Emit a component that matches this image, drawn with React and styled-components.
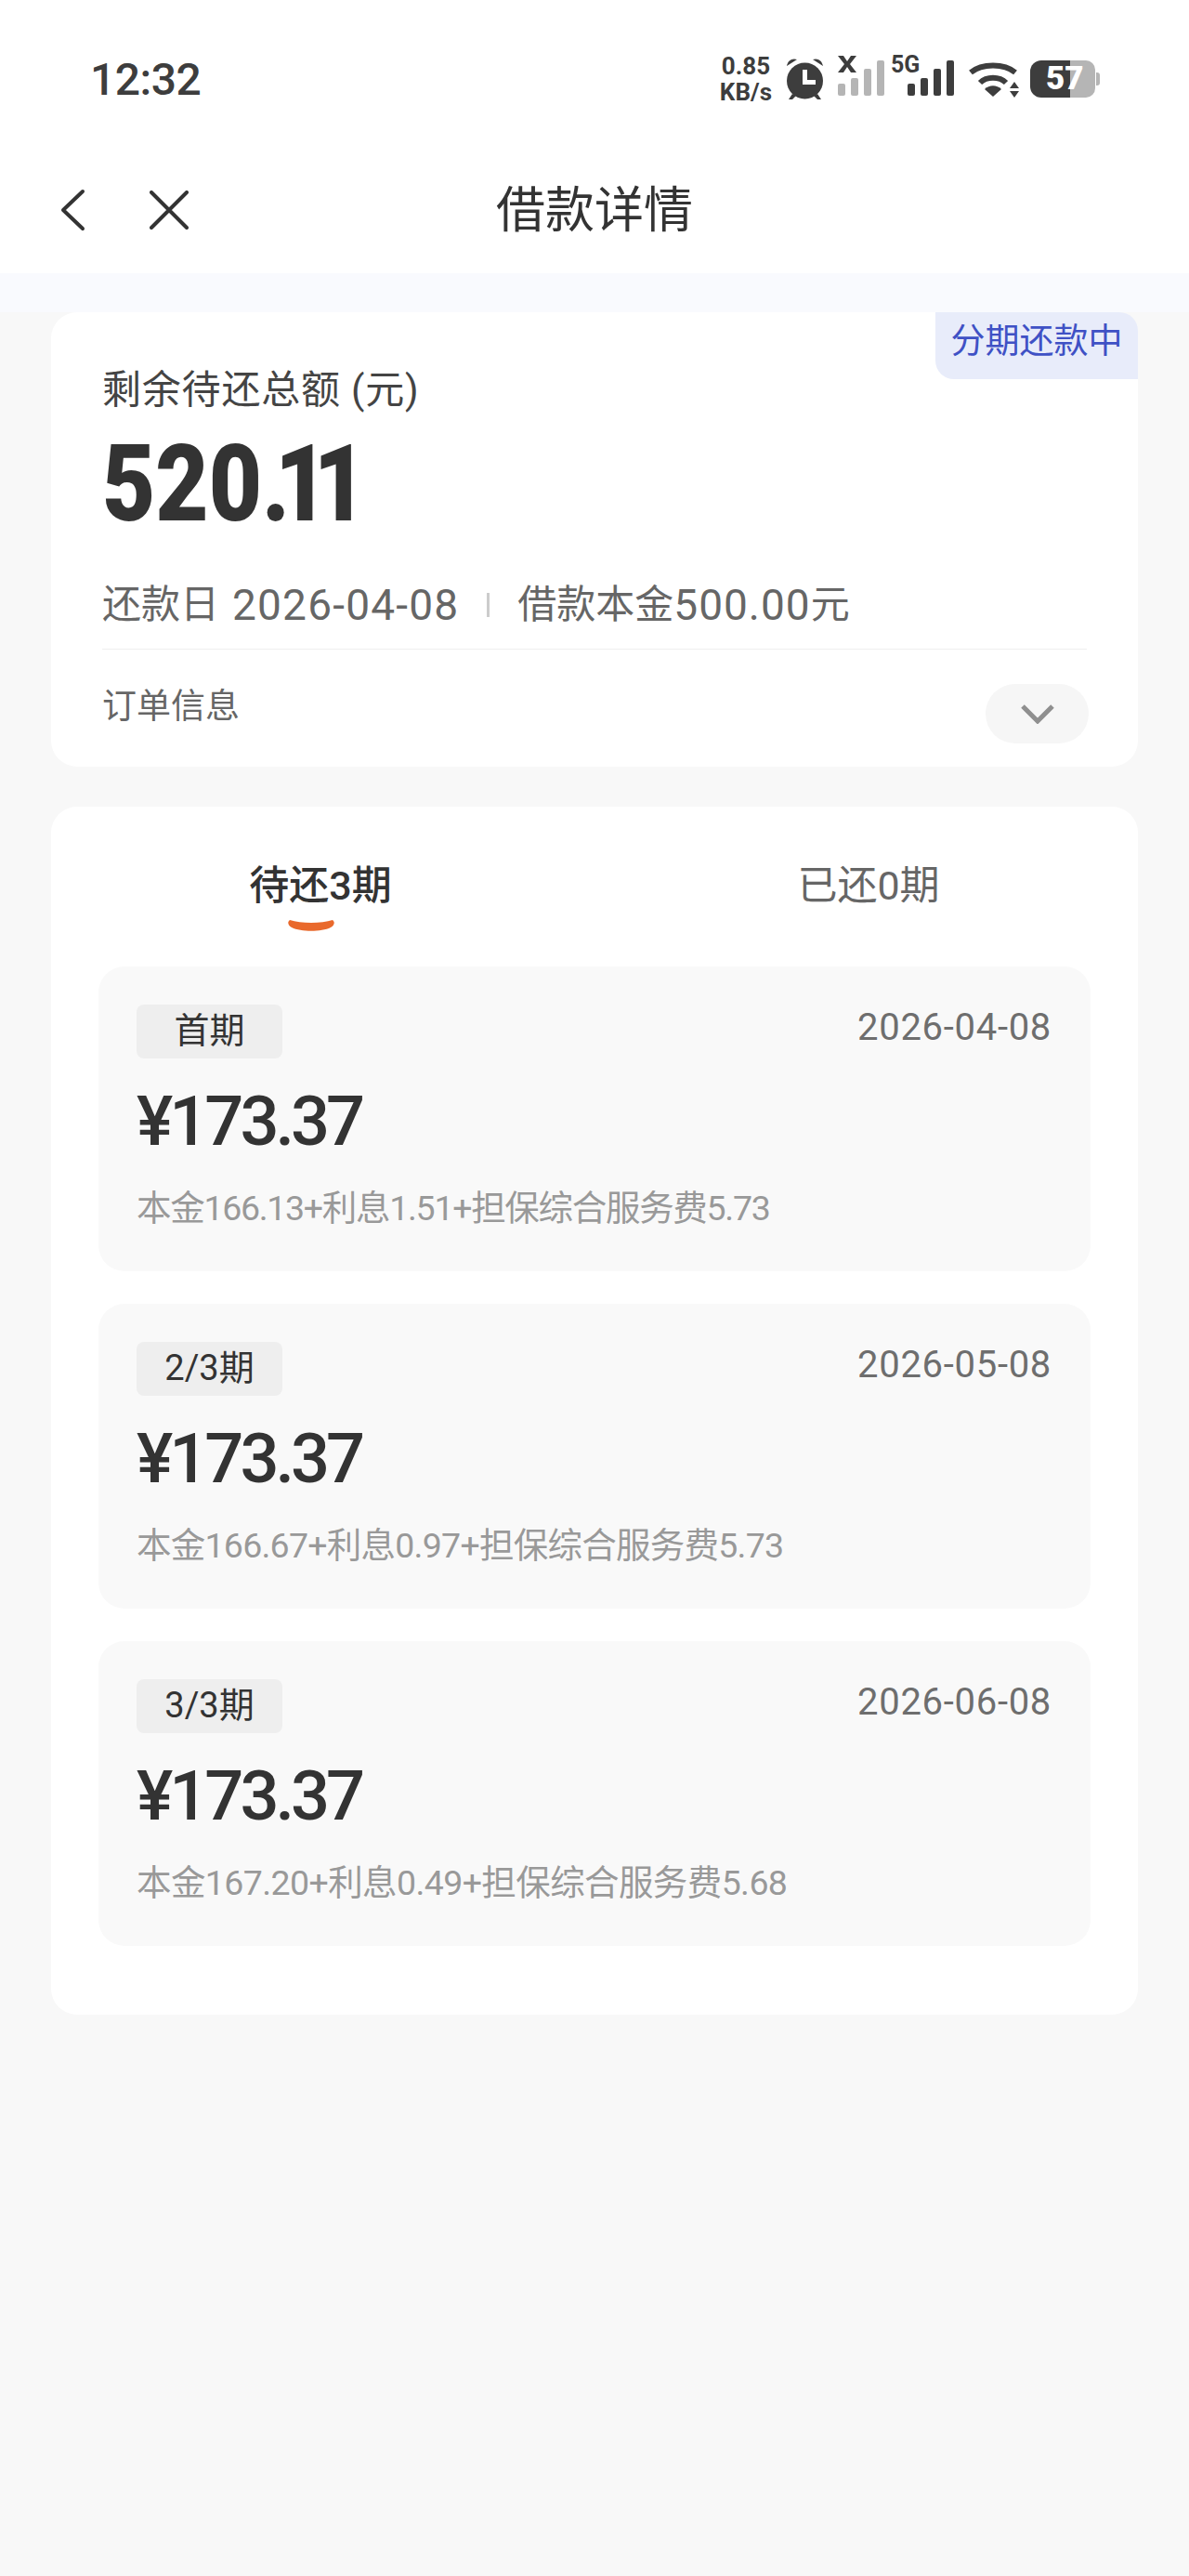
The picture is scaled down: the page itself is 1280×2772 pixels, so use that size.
import styled, { createGlobalStyle } from "styled-components";

const GlobalStyle = createGlobalStyle`
  html, body {
    margin: 0;
    padding: 0;
    background: #f8f8f8;
  }
  * {
    box-sizing: border-box;
  }
`;

const Page = styled.div`
  min-height: 2772px;
  background: #f8f8f8;
  color: #333;
  font-family: Roboto, "Noto Sans CJK SC", sans-serif;
`;

const Header = styled.header`
  background: #fff;
`;

const StatusBar = styled.div`
  height: 170px;
  padding: 0 96px 0 97px;
  display: flex;
  align-items: center;
  justify-content: space-between;
`;

const Clock = styled.span`
  font-size: 48px;
  font-weight: 500;
  color: #3d3d3d;
  letter-spacing: -0.5px;
`;

const StatusIcons = styled.div`
  display: flex;
  align-items: center;
  gap: 15px;
`;

const NetSpeed = styled.div`
  display: flex;
  flex-direction: column;
  align-items: center;
  font-size: 26px;
  line-height: 28px;
  font-weight: 700;
  color: #3d3d3d;
`;

const SignalWrap = styled.div`
  position: relative;
  width: 50px;
  height: 46px;
  margin-top: -10px;
  margin-left: ${(p) => p.$shift || 0}px;
`;

const SignalLabel = styled.span`
  position: absolute;
  left: -18px;
  top: 1px;
  font-size: 25px;
  line-height: 24px;
  font-weight: 700;
  color: #3d3d3d;
`;

const BatteryWrap = styled.div`
  position: relative;
  width: 75px;
  height: 40px;
  margin-left: -4px;
`;

const BatteryLevel = styled.span`
  position: absolute;
  left: 17px;
  top: 0;
  font-size: 35px;
  line-height: 40px;
  font-weight: 900;
  color: #fff;
`;

const Nav = styled.nav`
  height: 124px;
  padding-bottom: 10px;
  position: relative;
  display: flex;
  align-items: center;
  justify-content: center;
`;

const NavButtons = styled.div`
  position: absolute;
  left: 63px;
  top: 0;
  bottom: 12px;
  display: flex;
  align-items: center;
  gap: 66px;
`;

const Title = styled.h1`
  margin: 0;
  font-size: 53px;
  font-weight: 400;
  line-height: 60px;
  color: #333;
`;

const Strip = styled.div`
  height: 42px;
  background: #f9fafe;
`;

const Card = styled.section`
  position: relative;
  margin: ${(p) => p.$top}px 55px 0;
  background: #fff;
  border-radius: 28px;
  padding: ${(p) => p.$padding};
`;

const StatusBadge = styled.div`
  position: absolute;
  top: 0;
  right: 0;
  width: 218px;
  height: 72px;
  background: #e8ecfa;
  color: #3f51c5;
  font-size: 37px;
  line-height: 64px;
  text-align: center;
  border-radius: 0 20px 0 20px;
`;

const SummaryLabel = styled.div`
  padding-top: 56px;
  font-size: 42px;
  line-height: 56px;
  letter-spacing: 0.8px;
  color: #444;
`;

const Total = styled.div`
  margin-top: 13px;
  font-size: 115px;
  line-height: 120px;
  font-weight: 900;
  color: #333;
  white-space: nowrap;
  transform: scaleX(0.86);
  transform-origin: left center;
`;

const TotalCents = styled.span`
  letter-spacing: -18.5px;
`;

const MetaRow = styled.div`
  margin-top: 42px;
  display: flex;
  align-items: center;
  font-size: 42px;
  line-height: 56px;
  color: #666;
`;

const MetaDivider = styled.span`
  width: 3px;
  height: 26px;
  background: #ccc;
  margin: 0 30px 0 30px;
`;

const MetaNumber = styled.span`
  font-size: 46px;
  letter-spacing: ${(p) => p.$spacing}px;
  margin-left: ${(p) => p.$left || 0}px;
`;

const Rule = styled.div`
  margin-top: 19px;
  height: 1px;
  background: #eee;
`;

const InfoRow = styled.div`
  display: flex;
  align-items: center;
  justify-content: space-between;
  padding: 37px 0 25px;
`;

const InfoLabel = styled.span`
  font-size: 37px;
  line-height: 50px;
  color: #666;
  margin-bottom: 14px;
`;

const Toggle = styled.button`
  width: 111px;
  height: 64px;
  margin-right: -2px;
  border: 0;
  padding: 0;
  border-radius: 32px;
  background: #f6f6f6;
  display: flex;
  align-items: center;
  justify-content: center;
`;

const Tabs = styled.div`
  display: flex;
  justify-content: center;
  gap: 438px;
  padding-top: 60px;
`;

const Tab = styled.div`
  width: 152px;
  display: flex;
  flex-direction: column;
  align-items: center;
  font-size: 43px;
  line-height: 50px;
  white-space: nowrap;
  font-weight: ${(p) => (p.$active ? 500 : 400)};
  color: ${(p) => (p.$active ? "#333" : "#666")};
`;

const TabMark = styled.svg`
  display: block;
  margin: 11px 20px 0 0;
`;

const InstallmentList = styled.div`
  margin: 37px 51px 0;
  display: flex;
  flex-direction: column;
  gap: 35px;
`;

const Installment = styled.article`
  background: #f9f9f9;
  border-radius: 28px;
  padding: 41px 42px 43px 41px;
`;

const InstallmentTop = styled.div`
  display: flex;
  justify-content: space-between;
  align-items: flex-start;
`;

const Tag = styled.span`
  width: 157px;
  height: 58px;
  border-radius: 8px;
  background: #eee;
  font-size: 38px;
  line-height: 56px;
  text-align: center;
  color: #333;
`;

const DueDate = styled.span`
  font-size: 40px;
  line-height: 50px;
  letter-spacing: 0.7px;
  color: #6e6e6e;
`;

const Amount = styled.div`
  margin-top: 28px;
  font-size: 74px;
  line-height: 80px;
  font-weight: 500;
  letter-spacing: -4px;
  color: #333;
`;

const Breakdown = styled.div`
  margin-top: 28px;
  font-size: 37.5px;
  line-height: 50px;
  color: #999;
  letter-spacing: ${(p) => p.$spacing}px;
  white-space: nowrap;
`;

const installments = [
  { tag: "首期", date: "2026-04-08", amount: "¥173.37", spacing: -1.3, detail: "本金166.13+利息1.51+担保综合服务费5.73" },
  { tag: "2/3期", date: "2026-05-08", amount: "¥173.37", spacing: -0.75, detail: "本金166.67+利息0.97+担保综合服务费5.73" },
  { tag: "3/3期", date: "2026-06-08", amount: "¥173.37", spacing: -0.6, detail: "本金167.20+利息0.49+担保综合服务费5.68" },
];

const signalBars = [
  [0, 33, 13],
  [14, 27, 19],
  [28, 17, 29],
  [42, 8, 38],
];

const AlarmIcon = () => (
  <svg width="41" height="46" viewBox="0 0 41 46" fill="#3d3d3d">
    <circle cx="20.5" cy="25" r="19.5" />
    <path d="M1 9 C2 3 7 0 12 2 Z M40 9 C39 3 34 0 29 2 Z" />
    <path d="M7 39 L3 45 L7 45 L11 41 Z M34 39 L38 45 L34 45 L30 41 Z" />
    <path d="M18 13 h5 v11 h9 v5 h-14 Z" fill="#fff" />
  </svg>
);

const Signal = ({ color, label, shift }) => (
  <SignalWrap $shift={shift}>
    <svg width="50" height="46" viewBox="0 0 50 46" fill={color} overflow="visible">
      {signalBars.map(([x, y, h]) => (
        <rect key={x} x={x} y={y} width="8" height={h} rx="2" />
      ))}
      {!label && (
        <path d="M0 3 h6 l4 6 l4 -6 h6 l-7 9 l7 9 h-6 l-4 -6 l-4 6 h-6 l7 -9 Z" fill="#3d3d3d" />
      )}
    </svg>
    {label && <SignalLabel>{label}</SignalLabel>}
  </SignalWrap>
);

const WifiIcon = () => (
  <svg width="56" height="40" viewBox="0 0 56 40" fill="none">
    <path d="M3 13 C15 3 39 3 51 13" stroke="#3d3d3d" strokeWidth="6" />
    <path d="M13 24 C20 17 34 17 41 24" stroke="#3d3d3d" strokeWidth="6" />
    <path d="M18 31 C23 26 31 26 36 31 L27 39 Z" fill="#3d3d3d" />
    <path d="M45 30 h10 l-5 -7 Z M45 33 h10 l-5 7 Z" fill="#3d3d3d" />
  </svg>
);

const Battery = ({ level }) => (
  <BatteryWrap>
    <svg width="75" height="40" viewBox="0 0 75 40">
      <path d="M12 0 H60 a10 10 0 0 1 10 10 V30 a10 10 0 0 1 -10 10 H12 Z" fill="#b5b5b5" />
      <path d="M71 13 h1 a3 3 0 0 1 3 3 v8 a3 3 0 0 1 -3 3 h-1 Z" fill="#b5b5b5" />
      <path d="M12 0 H43 V40 H12 A12 12 0 0 1 0 28 V12 A12 12 0 0 1 12 0 Z" fill="#3d3d3d" />
    </svg>
    <BatteryLevel>{level}</BatteryLevel>
  </BatteryWrap>
);

const BackIcon = () => (
  <svg width="32" height="46" viewBox="0 0 32 46" fill="none" stroke="#333" strokeWidth="4" strokeLinecap="round" strokeLinejoin="round">
    <path d="M26 3 L5 23 L26 43" />
  </svg>
);

const CloseIcon = () => (
  <svg width="42" height="42" viewBox="0 0 42 42" fill="none" stroke="#333" strokeWidth="4" strokeLinecap="round">
    <path d="M2 2 L40 40 M40 2 L2 40" />
  </svg>
);

const ChevronDown = () => (
  <svg width="36" height="22" viewBox="0 0 36 22" fill="none" stroke="#8f8f8f" strokeWidth="5">
    <path d="M2 3 L18 19 L34 3" />
  </svg>
);

export default function App() {
  return (
    <Page>
      <GlobalStyle />
      <Header>
        <StatusBar>
          <Clock>12:32</Clock>
          <StatusIcons>
            <NetSpeed>
              <span>0.85</span>
              <span>KB/s</span>
            </NetSpeed>
            <AlarmIcon />
            <Signal color="#b5b5b5" />
            <Signal color="#3d3d3d" label="5G" shift={10} />
            <WifiIcon />
            <Battery level="57" />
          </StatusIcons>
        </StatusBar>
        <Nav>
          <NavButtons>
            <BackIcon />
            <CloseIcon />
          </NavButtons>
          <Title>借款详情</Title>
        </Nav>
      </Header>
      <Strip />
      <Card $top={0} $padding="0 55px">
        <StatusBadge>分期还款中</StatusBadge>
        <SummaryLabel>剩余待还总额 (元)</SummaryLabel>
        <Total>
          520<TotalCents>.11</TotalCents>
        </Total>
        <MetaRow>
          还款日
          <MetaNumber $left={14} $spacing={1.2}>2026-04-08</MetaNumber>
          <MetaDivider />
          借款本金
          <MetaNumber $spacing={1}>500.00</MetaNumber>元
        </MetaRow>
        <Rule />
        <InfoRow>
          <InfoLabel>订单信息</InfoLabel>
          <Toggle aria-label="展开">
            <ChevronDown />
          </Toggle>
        </InfoRow>
      </Card>
      <Card $top={43} $padding="0 0 74px">
        <Tabs>
          <Tab $active>
            待还3期
            <TabMark width="50" height="14" viewBox="0 0 50 14">
              <path d="M2 1 C14 5 36 5 48 1 C51 3 50 7 46 9 C36 14 14 14 4 9 C0 7 -1 3 2 1 Z" fill="#e9692c" />
            </TabMark>
          </Tab>
          <Tab>已还0期</Tab>
        </Tabs>
        <InstallmentList>
          {installments.map((item) => (
            <Installment key={item.date}>
              <InstallmentTop>
                <Tag>{item.tag}</Tag>
                <DueDate>{item.date}</DueDate>
              </InstallmentTop>
              <Amount>{item.amount}</Amount>
              <Breakdown $spacing={item.spacing}>{item.detail}</Breakdown>
            </Installment>
          ))}
        </InstallmentList>
      </Card>
    </Page>
  );
}
